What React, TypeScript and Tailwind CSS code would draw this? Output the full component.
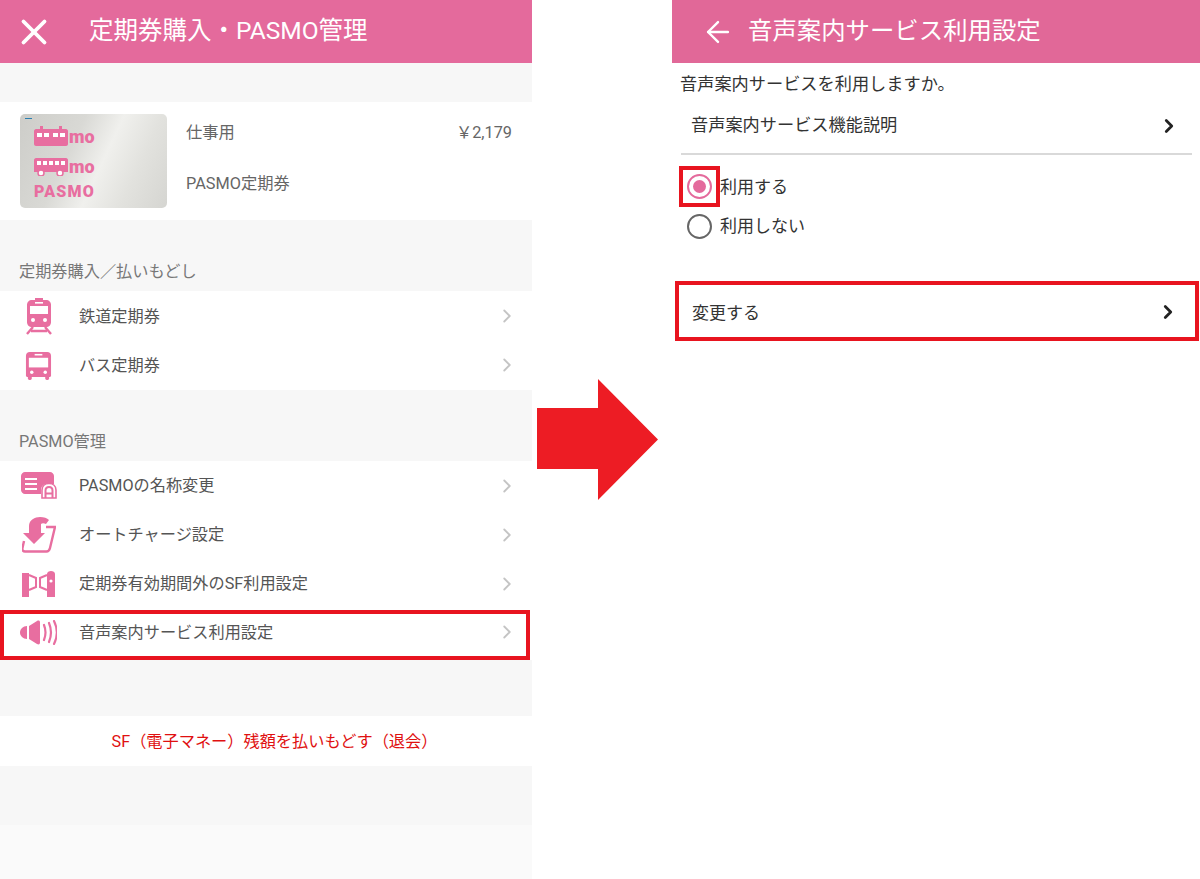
import { ArrowLeft, ChevronRight, X } from "lucide-react";
import type { ReactNode } from "react";

const font = "font-['Roboto','Noto_Sans_CJK_JP',sans-serif]";

function TrainIcon({ className = "" }: { className?: string }) {
  return (
    <svg viewBox="0 0 28 38" className={className}>
      <path d="M10 1h8v3h-8z" fill="#e86ea0" />
      <path d="M7 3h14c3 0 5 2 5 5v17c0 3-2 5-5 5H7c-3 0-5-2-5-5V8c0-3 2-5 5-5z" fill="#e86ea0" />
      <rect x="5" y="9" width="18" height="8" fill="#fff" />
      <rect x="10" y="5" width="8" height="1.6" fill="#fff" />
      <circle cx="8" cy="23" r="2" fill="#fff" />
      <circle cx="20" cy="23" r="2" fill="#fff" />
      <path d="M8 30l-6 7M20 30l6 7M6 34h16" stroke="#e86ea0" strokeWidth="2.4" fill="none" />
    </svg>
  );
}

function BusIcon({ className = "" }: { className?: string }) {
  return (
    <svg viewBox="0 0 28 30" className={className}>
      <path d="M5 1h18c2.500 0 4 1.500 4 4v20c0 1.500-1 2-2 2H3c-1 0-2-.5-2-2V5c0-2.500 1.500-4 4-4z" fill="#e86ea0" />
      <rect x="4" y="7" width="20" height="10" fill="#fff" />
      <rect x="10" y="3" width="8" height="1.6" fill="#fff" />
      <circle cx="7" cy="22" r="1.800" fill="#fff" />
      <circle cx="21" cy="22" r="1.800" fill="#fff" />
      <rect x="3" y="26" width="4" height="4" rx="1.500" fill="#e86ea0" />
      <rect x="21" y="26" width="4" height="4" rx="1.500" fill="#e86ea0" />
    </svg>
  );
}

function RenameIcon({ className = "" }: { className?: string }) {
  return (
    <svg viewBox="0 0 36 27" className={className}>
      <path d="M4 0h25c2 0 4 2 4 4v8H26c-4 0-6 3-6 6v4H4c-2 0-4-2-4-4V4c0-2 2-4 4-4z" fill="#e86ea0" />
      <path d="M4 7h12M4 12h12M4 17h12" stroke="#fff" strokeWidth="2" />
      <path d="M21 26v-8c0-4 3-6.500 7-6.500s7 2.500 7 6.500v8z" fill="#fff" stroke="#e86ea0" strokeWidth="1.600" />
      <path d="M24.500 26v-7.500c0-2 1.500-3.500 3.500-3.500s3.500 1.500 3.500 3.500V26M24.500 21.500h7" fill="none" stroke="#e86ea0" strokeWidth="2" />
    </svg>
  );
}

function ChargeIcon({ className = "" }: { className?: string }) {
  return (
    <svg viewBox="0 0 34 36" className={className}>
      <path d="M7 16V9C7 3 13 0 18 0c4 0 7 1 9 3l-3 4c-2-1-4-1-5 0v9h4L12 27 1 16z" fill="#e86ea0" />
      <path d="M24 10h9l-5 21c-.5 2-2 3.500-3.500 3.500H3c-2 0-3-1.500-2.500-3.500L2 24" fill="none" stroke="#e86ea0" strokeWidth="2.400" />
    </svg>
  );
}

function GateIcon({ className = "" }: { className?: string }) {
  return (
    <svg viewBox="0 0 33 26" className={className}>
      <path d="M0 2h7v24H0z" fill="#e86ea0" />
      <path d="M7 4l7 3v9l-7 3" fill="none" stroke="#e86ea0" strokeWidth="2" />
      <path d="M25 4l-7 3v9l7 3" fill="none" stroke="#e86ea0" strokeWidth="2" />
      <path d="M25 3c0-2 2-3 4-3s4 1 4 3v23h-8z" fill="#e86ea0" />
      <circle cx="29" cy="10" r="1.600" fill="#fff" />
    </svg>
  );
}

function SpeakerIcon({ className = "" }: { className?: string }) {
  return (
    <svg viewBox="0 0 37 25" className={className}>
      <path d="M7 6v13c-4 0-7-3-7-6.500S3 6 7 6z" fill="#e86ea0" />
      <path d="M9 6l8-5c1.500-1 3-.5 3 1.500v20c0 2-1.500 2.500-3 1.500l-8-5z" fill="#e86ea0" />
      <path d="M24 5c2 5 2 10 0 15M29 3c2.500 6 2.500 13 0 19M34 1c3.500 7 3.500 16 0 23" fill="none" stroke="#e86ea0" strokeWidth="2.200" strokeLinecap="round" />
    </svg>
  );
}

function CardFace() {
  return (
    <div className="relative w-[147px] h-[94px] rounded-[5px] bg-[linear-gradient(115deg,#cdcdc9_0%,#d9d9d5_35%,#f0f0ed_55%,#e2e2de_75%,#d5d5d1_100%)] flex flex-col pl-[14px] pt-[12px]">
      <div className="absolute left-[5px] top-[4px] w-[7px] h-px bg-[#2a7fb0]" />
      <div className="flex items-end gap-px h-[20px]">
        <svg viewBox="0 0 34 20" className="w-[34px] h-[20px]">
          <path d="M2 3h30c1 0 2 1 2 2v13c0 1-1 2-2 2H2c-1 0-2-1-2-2V5c0-1 1-2 2-2z" fill="#e86ea0" />
          <path d="M6 0h3v3H6zM25 0h3v3h-3z" fill="#e86ea0" />
          <path d="M3 7h5v4H3zM10 7h5v4h-5zM19 7h5v4h-5zM26 7h5v4h-5z" fill="#fff" />
        </svg>
        <span className="text-[#e86ea0] text-[18px] leading-[18px] font-black">mo</span>
      </div>
      <div className="mt-[12px] flex items-end gap-px h-[18px]">
        <svg viewBox="0 0 34 18" className="w-[34px] h-[18px]">
          <path d="M2 0h30c1 0 2 1 2 2v12H0V2c0-1 1-2 2-2z" fill="#e86ea0" />
          <path d="M3 3h4v4H3zM9 3h4v4H9zM15 3h4v4h-4zM21 3h4v4h-4zM27 3h4v4h-4z" fill="#fff" />
          <circle cx="7" cy="15" r="3" fill="#fff" stroke="#e86ea0" strokeWidth="1.500" />
          <circle cx="26" cy="15" r="3" fill="#fff" stroke="#e86ea0" strokeWidth="1.500" />
        </svg>
        <span className="text-[#e86ea0] text-[18px] leading-[18px] font-black">mo</span>
      </div>
      <span className="mt-[8px] text-[#e86ea0] text-[16px] leading-[16px] font-black tracking-[1.2px]">PASMO</span>
    </div>
  );
}

function MenuRow({ icon, label, h = "h-[49.5px]" }: { icon: ReactNode; label: string; h?: string }) {
  return (
    <div className={`flex items-center ${h} bg-white`}>
      <div className="w-[79px] flex justify-center pr-[2px] shrink-0">
        <div className="w-[40px] flex justify-center">{icon}</div>
      </div>
      <span className="flex-1 mt-[2px] text-[16.2px] text-[#555]">{label}</span>
      <ChevronRight className="w-[22px] h-[22px] text-[#c4c4c4] mr-[14px]" strokeWidth={2} />
    </div>
  );
}

function SectionLabel({ children }: { children: ReactNode }) {
  return (
    <div className="h-[71px] flex items-end pl-[19px] pb-[9px] text-[16.2px] leading-[20px] text-[#777]">
      {children}
    </div>
  );
}

export default function App() {
  return (
    <div className={`${font} flex w-[1200px] h-[879px] bg-white overflow-hidden`}>
      {/* left phone */}
      <div className="w-[532px] h-full bg-[#f7f7f7] shrink-0 flex flex-col">
        <div className="h-[63px] bg-[#e46a9c] flex items-center text-white shrink-0">
          <X className="w-[42px] h-[42px] ml-[13px]" strokeWidth={2.2} />
          <span className="ml-[34px] text-[24.5px]">定期券購入・PASMO管理</span>
        </div>
        <div className="mt-[39px] h-[118px] bg-white flex items-center pl-[20px] shrink-0">
          <CardFace />
          <div className="flex-1 ml-[19px] mr-[20px] h-[94px] flex flex-col justify-between py-[7px] text-[16.3px] text-[#666]">
            <div className="flex justify-between">
              <span>仕事用</span>
              <span>￥2,179</span>
            </div>
            <span className="mb-[5px]">PASMO定期券</span>
          </div>
        </div>
        <SectionLabel>定期券購入／払いもどし</SectionLabel>
        <MenuRow icon={<TrainIcon className="w-[28px] h-[38px]" />} label="鉄道定期券" />
        <MenuRow icon={<BusIcon className="w-[27px] h-[29px]" />} label="バス定期券" />
        <SectionLabel>PASMO管理</SectionLabel>
        <MenuRow icon={<RenameIcon className="w-[36px] h-[27px]" />} label="PASMOの名称変更" h="h-[49px]" />
        <MenuRow icon={<ChargeIcon className="w-[34px] h-[36px]" />} label="オートチャージ設定" h="h-[49px]" />
        <MenuRow icon={<GateIcon className="w-[33px] h-[26px]" />} label="定期券有効期間外のSF利用設定" h="h-[49px]" />
        <div className="relative">
          <MenuRow icon={<SpeakerIcon className="w-[37px] h-[25px]" />} label="音声案内サービス利用設定" h="h-[52px] pb-[4px]" />
          <div className="absolute left-0 top-[2px] w-[530px] h-[50px] border-[4px] border-[#e8141f]" />
        </div>
        <div className="mt-[56px] h-[50px] bg-white flex items-center justify-center pl-[17px] pt-[3px] text-[16.2px] text-[#e01010] shrink-0">
          SF（電子マネー）残額を払いもどす（退会）
        </div>
        <div className="mt-[59px] flex-1 bg-[#fafafa]" />
      </div>

      {/* arrow between the phones */}
      <div className="w-[140px] shrink-0 flex items-center justify-center">
        <svg viewBox="0 0 121 121" className="w-[121px] h-[121px] -translate-x-[5px]">
          <path d="M0 29h61V0l60 60.500L61 121V90H0z" fill="#ed1c24" />
        </svg>
      </div>

      {/* right phone */}
      <div className="flex-1 flex flex-col">
        <div className="h-[63px] bg-[#e16898] flex items-center text-white shrink-0">
          <ArrowLeft className="w-[34px] h-[34px] ml-[29px]" strokeWidth={1.7} />
          <span className="ml-[13px] text-[24.4px]">音声案内サービス利用設定</span>
        </div>
        <div className="h-[44px] pl-[8px] flex items-center text-[17.2px] text-[#333]">音声案内サービスを利用しますか。</div>
        <div className="h-[37px] pl-[19px] pr-[20px] flex items-center justify-between text-[17.2px] text-[#333]">
          <span>音声案内サービス機能説明</span>
          <ChevronRight className="w-[22px] h-[22px] text-[#222]" strokeWidth={3} />
        </div>
        <div className="mt-[9px] mx-[9px] mr-[8px] h-[2px] bg-[#d9d9d9]" />
        <div className="relative mt-[11px] h-[40px] pl-[15px] flex items-center gap-[8px] text-[17px] text-[#333]">
          <div className="w-[25px] h-[25px] rounded-full border-[2px] border-[#e46a9c] flex items-center justify-center">
            <div className="w-[13px] h-[13px] rounded-full bg-[#e46a9c]" />
          </div>
          <span className="mt-[3px]">利用する</span>
          <div className="absolute left-[7px] top-0 w-[41px] h-[41px] border-[4px] border-[#e8141f]" />
        </div>
        <div className="h-[40px] pl-[15px] flex items-center gap-[8px] text-[17px] text-[#333]">
          <div className="w-[25px] h-[25px] rounded-full border-[2.5px] border-[#666]" />
          <span className="mt-[2px]">利用しない</span>
        </div>
        <div className="mt-[35px] h-[60px] ml-[3px] mr-[1px] pl-[13px] pr-[16px] flex items-center justify-between text-[17px] text-[#333] border-[4px] border-[#e8141f]">
          <span className="mt-[5px]">変更する</span>
          <ChevronRight className="w-[22px] h-[22px] mt-[1px] text-[#222]" strokeWidth={3} />
        </div>
      </div>
    </div>
  );
}
